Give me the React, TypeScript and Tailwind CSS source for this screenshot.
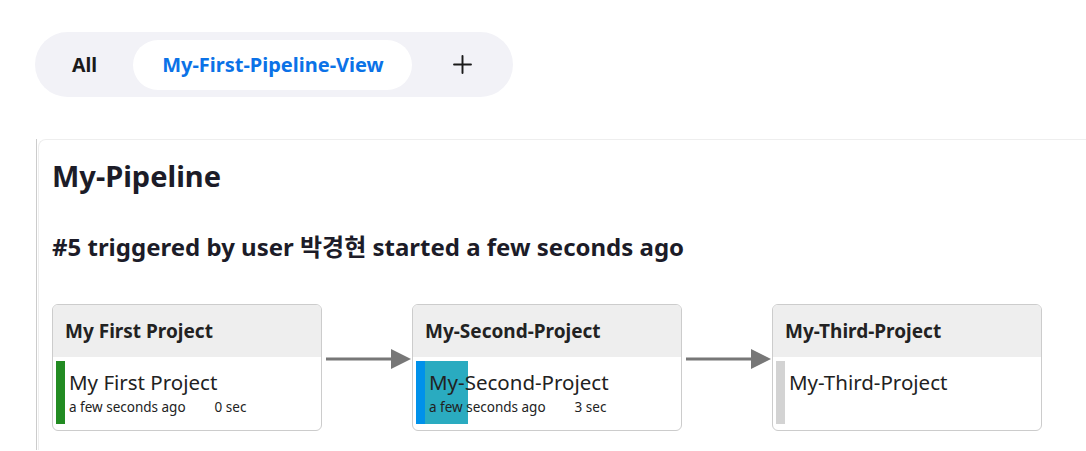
import { Plus } from 'lucide-react';

type Stage = {
  name: string;
  time?: string;
  duration?: string;
  status: 'success' | 'running' | 'pending';
};

const stages: Stage[] = [
  { name: 'My First Project', time: 'a few seconds ago', duration: '0 sec', status: 'success' },
  { name: 'My-Second-Project', time: 'a few seconds ago', duration: '3 sec', status: 'running' },
  { name: 'My-Third-Project', status: 'pending' },
];

function Arrow() {
  return (
    <svg width="90" height="20" viewBox="0 0 90 20" className="mt-[45px] shrink-0">
      <line x1="4" y1="10" x2="72" y2="10" stroke="#777" strokeWidth="3" />
      <polygon points="69,0 89,10 69,20" fill="#777" />
    </svg>
  );
}

function StageCard({ stage }: { stage: Stage }) {
  return (
    <div className="w-[270px] h-[127px] shrink-0 border border-[#cccccc] rounded-md overflow-hidden bg-white">
      <div className="h-[52px] bg-[#eeeeee] flex items-center pl-[12px] text-[19px] font-bold text-[#222]">
        {stage.name}
      </div>
      <div className="flex pl-[3px] pt-[4px] h-[73px]">
        <div className="relative flex h-[63px]">
          {stage.status === 'success' && <div className="w-[9px] h-full bg-[#228b22]" />}
          {stage.status === 'pending' && <div className="w-[9px] h-full bg-[#d3d3d3]" />}
          {stage.status === 'running' && (
            <>
              <div className="w-[9px] h-full bg-[#0091ea]" />
              <div className="w-[43px] h-full bg-[#2aabc0]" />
            </>
          )}
        </div>
        <div
          className={
            stage.status === 'running'
              ? 'ml-[-39px] relative flex flex-col text-[#222]'
              : 'ml-[4px] flex flex-col text-[#222]'
          }
        >
          <div className="text-[20.5px] leading-[28px] mt-[7px]">{stage.name}</div>
          {stage.time && (
            <div className="flex gap-[29px] text-[13.5px] leading-[18px] mt-[2px]">
              <span>{stage.time}</span>
              <span>{stage.duration}</span>
            </div>
          )}
        </div>
      </div>
    </div>
  );
}

export default function App() {
  return (
    <div
      className="bg-white min-h-[451px] pl-[35px] pt-[32px] text-[#1c1c28]"
      style={{ fontFamily: '"Noto Sans", "Noto Sans CJK KR", sans-serif' }}
    >
      <div className="inline-flex items-center h-[65px] rounded-full bg-[#f2f2f7] pl-2">
        <div className="h-[50px] flex items-center px-[29px] text-[19.5px] font-bold text-[#1a1a1a]">All</div>
        <div className="ml-[7px] h-[50px] flex items-center pl-[29px] pr-[28px] rounded-full bg-white text-[20px] font-bold text-[#0b72e7]">
          My-First-Pipeline-View
        </div>
        <div className="h-[50px] flex items-center pl-[36px] pr-[36px] text-[#1a1a1a]">
          <Plus size={29} strokeWidth={1.6} />
        </div>
      </div>

      <div className="mt-[42px] ml-px border-l border-[#cccccc] h-[311px]">
        <div className="ml-px h-full border-t border-l border-[#eeeeee] rounded-tl-lg pl-[13px] pt-[15px]">
          <h1 className="text-[29px] font-bold leading-[42px] text-[#1c1c28]">My-Pipeline</h1>
          <h2 className="mt-[34px] text-[24px] font-bold leading-[32px] text-[#1c1c28]">
            #5 triggered by user 박경현 started a few seconds ago
          </h2>
          <div className="mt-[41px] flex items-start">
            {stages.map((s, i) => (
              <div key={s.name} className="flex items-start">
                {i > 0 && <Arrow />}
                <StageCard stage={s} />
              </div>
            ))}
          </div>
        </div>
      </div>
    </div>
  );
}
